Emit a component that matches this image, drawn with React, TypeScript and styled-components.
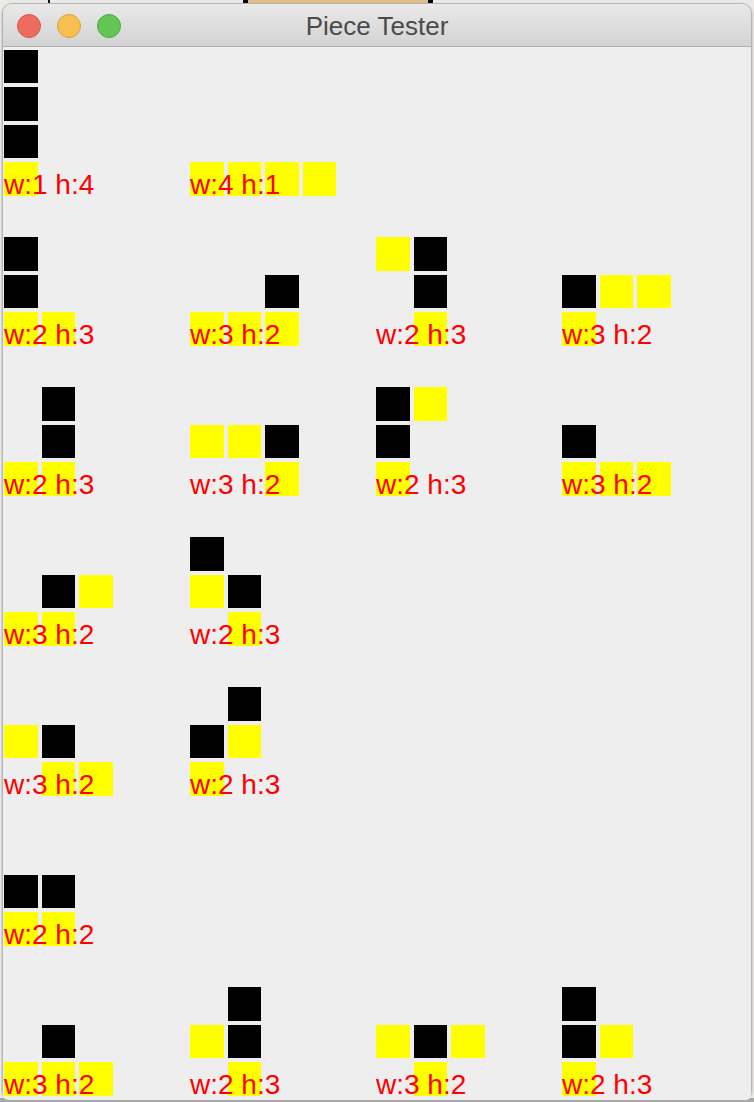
import React from 'react';
import styled, { createGlobalStyle } from 'styled-components';

const GlobalStyle = createGlobalStyle`
  html, body {
    margin: 0;
    padding: 0;
  }
  body {
    background: #a9a9a7;
    font-family: "Liberation Sans", Arial, sans-serif;
  }
`;

// [x, y, skirt] with y counted from the bottom row
type Cell = [number, number, number];

const ROWS: Cell[][][] = [
  [
    [[0, 0, 1], [0, 1, 0], [0, 2, 0], [0, 3, 0]],
    [[0, 0, 1], [1, 0, 1], [2, 0, 1], [3, 0, 1]],
  ],
  [
    [[0, 0, 1], [1, 0, 1], [0, 1, 0], [0, 2, 0]],
    [[0, 0, 1], [1, 0, 1], [2, 0, 1], [2, 1, 0]],
    [[1, 0, 1], [1, 1, 0], [1, 2, 0], [0, 2, 1]],
    [[0, 0, 1], [0, 1, 0], [1, 1, 1], [2, 1, 1]],
  ],
  [
    [[0, 0, 1], [1, 0, 1], [1, 1, 0], [1, 2, 0]],
    [[2, 0, 1], [0, 1, 1], [1, 1, 1], [2, 1, 0]],
    [[0, 0, 1], [0, 1, 0], [0, 2, 0], [1, 2, 1]],
    [[0, 0, 1], [1, 0, 1], [2, 0, 1], [0, 1, 0]],
  ],
  [
    [[0, 0, 1], [1, 0, 1], [1, 1, 0], [2, 1, 1]],
    [[1, 0, 1], [0, 1, 1], [1, 1, 0], [0, 2, 0]],
  ],
  [
    [[1, 0, 1], [2, 0, 1], [0, 1, 1], [1, 1, 0]],
    [[0, 0, 1], [0, 1, 0], [1, 1, 1], [1, 2, 0]],
  ],
  [
    [[0, 0, 1], [1, 0, 1], [0, 1, 0], [1, 1, 0]],
  ],
  [
    [[0, 0, 1], [1, 0, 1], [2, 0, 1], [1, 1, 0]],
    [[1, 0, 1], [0, 1, 1], [1, 1, 0], [1, 2, 0]],
    [[1, 0, 1], [0, 1, 1], [1, 1, 0], [2, 1, 1]],
    [[0, 0, 1], [0, 1, 0], [1, 1, 1], [0, 2, 0]],
  ],
];

const Desktop = styled.div`
  position: relative;
  height: 1102px;
  background: linear-gradient(#ebeae6 0, #ebeae6 1098px, #a9a9a7 1098px);
  padding: 3px 0 0 2px;
  box-sizing: border-box;
  overflow: hidden;
`;

// bits of other desktop windows peeking above ours
const BackLine = styled.div`
  position: absolute;
  top: 0;
  left: 48px;
  width: 2px;
  height: 4px;
  background: #111;
`;

const BackBox = styled.div`
  position: absolute;
  top: 0;
  left: 243px;
  width: 180px;
  height: 4px;
  background: #e2bd88;
  border-left: 5px solid #000;
  border-right: 5px solid #000;
`;

const Window = styled.div`
  position: relative;
  width: 750px;
  height: 1094px;
  box-sizing: border-box;
  border: 1px solid #b4b4b4;
  border-radius: 10px 10px 6px 6px;
  display: flex;
  flex-direction: column;
  box-shadow: 0 1px 2px rgba(0, 0, 0, 0.35);
`;

const TitleBar = styled.div`
  height: 42px;
  flex: none;
  display: grid;
  grid-template-columns: 1fr auto 1fr;
  align-items: center;
  background: linear-gradient(#e9e9e9, #d3d3d3);
  border-bottom: 1px solid #b0b0b0;
  border-radius: 9px 9px 0 0;
`;

const Lights = styled.div`
  display: flex;
  gap: 16px;
  padding-left: 14px;
`;

const Light = styled.span<{ $fill: string; $edge: string }>`
  width: 24px;
  height: 24px;
  border-radius: 50%;
  box-sizing: border-box;
  background: ${(p) => p.$fill};
  border: 1px solid ${(p) => p.$edge};
`;

const Title = styled.div`
  font-size: 26px;
  color: #4b4b4b;
  line-height: 42px;
  padding-top: 1px;
`;

const Content = styled.div`
  flex: 1;
  background: #eeeeee;
  padding: 2.5px 0 0 1px;
  border-radius: 0 0 5px 5px;
`;

const Row = styled.div`
  display: flex;
`;

const Piece = styled.div`
  width: 186px;
  height: 146px;
  margin-bottom: 4px;
  display: grid;
  grid-template-columns: repeat(4, 33.5px);
  grid-template-rows: repeat(4, 33.5px);
  gap: 4px;
`;

const Square = styled.div<{ $col: number; $row: number; $skirt: boolean }>`
  grid-column: ${(p) => p.$col};
  grid-row: ${(p) => p.$row};
  background: ${(p) => (p.$skirt ? '#ffff00' : '#000000')};
`;

const Label = styled.div`
  grid-column: 1 / -1;
  grid-row: 4;
  align-self: end;
  color: #ff0000;
  font-size: 28px;
  line-height: 22px;
  white-space: nowrap;
`;

const renderPiece = (cells: Cell[], idx: number) => {
  const w = Math.max(...cells.map((c) => c[0])) + 1;
  const h = Math.max(...cells.map((c) => c[1])) + 1;
  return (
    <Piece key={idx}>
      {cells.map(([x, y, s], i) => (
        <Square key={i} $col={x + 1} $row={4 - y} $skirt={s === 1} />
      ))}
      <Label>{`w:${w} h:${h}`}</Label>
    </Piece>
  );
};

const App = () => {
  return (
    <>
      <GlobalStyle />
      <Desktop>
        <BackLine />
        <BackBox />
        <Window>
          <TitleBar>
            <Lights>
              <Light $fill="#ee6b60" $edge="#d5574d" />
              <Light $fill="#f6bf50" $edge="#d9a23a" />
              <Light $fill="#62c655" $edge="#4fa843" />
            </Lights>
            <Title>Piece Tester</Title>
            <div />
          </TitleBar>
          <Content>
            {ROWS.map((row, r) => (
              <Row key={r}>{row.map((cells, i) => renderPiece(cells, i))}</Row>
            ))}
          </Content>
        </Window>
      </Desktop>
    </>
  );
};

export default App;
